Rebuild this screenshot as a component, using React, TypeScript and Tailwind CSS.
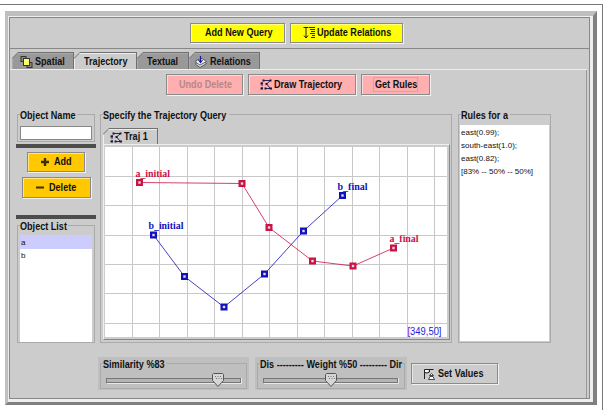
import type { ReactNode } from "react";

const RED = "#cc1144";
const BLUE = "#1111bb";

const vLines = [27.5, 54.5, 82.5, 109.5, 137.5, 164.5, 192.5, 219.5, 247.5, 274.5, 302.5, 329.5];
const hLines = [29.5, 58.5, 88.5, 117.5, 146.5, 176.5];

const trajectories = [
    { color: RED, points: [[34.5, 35.5], [137, 36.5], [164, 80.5], [207.5, 114], [248, 119], [288.5, 101]] },
    { color: BLUE, points: [[48.5, 88], [79.5, 129.5], [119, 160], [159.5, 127], [198.5, 84], [237.5, 48.5]] },
];

const labels = [
    { text: "a_initial", x: 30.5, y: 29.5, w: 34.5, color: RED },
    { text: "b_initial", x: 43.5, y: 82, w: 35, color: BLUE },
    { text: "b_final", x: 232.5, y: 43, w: 30, color: BLUE },
    { text: "a_final", x: 284.5, y: 95, w: 29, color: RED },
];

const rules = ["east(0.99);", "south-east(1.0);", "east(0.82);", "[83% -- 50% -- 50%]"];

function SpatialIcon() {
    return (
        <svg width="13" height="12" viewBox="0 0 13 12" className="shrink-0">
            <rect x="1" y="0.5" width="5" height="5" fill="#888" stroke="#333" />
            <rect x="7" y="6.5" width="5" height="5" fill="#888" stroke="#333" />
            <rect x="3.5" y="2.5" width="6" height="7" fill="#ffff66" stroke="#333" />
        </svg>
    );
}

function RelationsIcon() {
    return (
        <svg width="12" height="12" viewBox="0 0 12 12" className="shrink-0">
            <path d="M1 6.5 7 4.5 11.5 7.5 5 11.5 1 8.5Z" fill="#ddd" stroke="#444" strokeWidth="0.8" />
            <path d="M1 4.5 7 2.5 11.5 5.5 5 9 1 6.5Z" fill="#f4f4f4" stroke="#444" strokeWidth="0.8" />
            <path d="M5.5 0v6M3.5 4l2 2.5 2-2.5" fill="none" stroke="#1a1a99" strokeWidth="1.2" />
        </svg>
    );
}

function TrajectoryIcon() {
    return (
        <svg width="12" height="11" viewBox="0 0 12 11" className="shrink-0">
            <path d="M3.5 1.5H10.5L6.5 5 10.5 9.5H5.5" fill="none" stroke="#2c2860" />
            <path d="M2 3v6" stroke="#2c2860" strokeDasharray="1.5 1" />
            <path d="M2.5 0.5h2v2h-2zM0.5 3.5h2.5v2H0.5zM0.5 8.5h2.5v2H0.5zM9.5 0.5h2v2h-2zM5.5 4h2v2h-2zM4.5 8.5h2v2h-2zM9.5 8.5h2.5v2H9.5z" fill="#201830" />
        </svg>
    );
}

function UpdateIcon() {
    return (
        <svg width="13" height="12" viewBox="0 0 13 12" className="shrink-0">
            <path d="M0.5 0.5h5M3 1v10M1 8.5l2 2.5 2-2.5" fill="none" stroke="#222200" />
            <path d="M6 0.5h6M7 2.5h5M8 4.5h4M7 6.5h5M9 8.5h3M8 10.5h4" stroke="#333300" />
        </svg>
    );
}

function SetIcon() {
    return (
        <svg width="12" height="12" viewBox="0 0 12 12" className="shrink-0">
            <path d="M1.5 11V1.5h5V4L4 5 1.5 4.5M6 1.5h4.5" fill="none" stroke="#222" />
            <rect x="2" y="2" width="3" height="2" fill="#fff" />
            <path d="M8.5 5.5 6.5 7.5h4Z" fill="#fff" stroke="#222" strokeWidth="0.8" />
            <path d="M7 8.5h3L11.5 11.5h-6Z" fill="#fff" stroke="#222" strokeWidth="0.8" />
        </svg>
    );
}

// condensed bold text; className carries the width it takes in the row
function Label({ className, children }: { className: string; children: ReactNode }) {
    return (
        <span className={`inline-block shrink-0 ${className}`}>
            <span className="inline-block origin-left scale-x-[0.79] whitespace-pre">{children}</span>
        </span>
    );
}

function Button({ className, children }: { className: string; children: ReactNode }) {
    return (
        <button className={`flex shrink-0 items-center justify-center border border-[#8a8a8a] text-left shadow-[1px_1px_0_#f2f2f2,inset_1px_1px_0_#ffffff80] ${className}`}>
            {children}
        </button>
    );
}

function Tab({ active, className, children }: { active?: boolean; className: string; children: ReactNode }) {
    return (
        <div className={`h-full bg-[#707070] pt-px pr-px [clip-path:polygon(6px_0,100%_0,100%_100%,0_100%,0_6px)] ${className}`}>
            <div
                className={`flex h-full items-center border-t border-l [clip-path:polygon(6px_0,100%_0,100%_100%,0_100%,0_6px)] ${
                    active ? "border-[#eeeeee] bg-[#cccccc]" : "border-[#aaaaaa] bg-[#999999]"
                }`}
            >
                {children}
            </div>
        </div>
    );
}

function Group({ title, titleWidth, className, children }: { title: string; titleWidth: string; className: string; children: ReactNode }) {
    return (
        <div className={`flex flex-col border border-[#aaaaaa] ${className}`}>
            <div className="-mt-[7px] ml-[2px] h-[14px] self-start bg-inherit pr-px leading-[14px]">
                <Label className={titleWidth}>{title}</Label>
            </div>
            {children}
        </div>
    );
}

function Slider({ title, titleWidth, thumb, className }: { title: string; titleWidth: string; thumb: number; className: string }) {
    return (
        <div className={`h-[33px] shrink-0 bg-[#bfbfbf] px-[2px] pt-[6px] ${className}`}>
            <Group title={title} titleWidth={titleWidth} className="h-[26px] border-[#a4a4a4] bg-[#bfbfbf]">
                <svg width="140" height="15" viewBox="0 0 140 15" className="mt-[2px] ml-[3px]">
                    <rect x="2.5" y="5.5" width="134" height="4" fill="#b4b4b4" stroke="#777" />
                    <path d="M3 10.5h134.5V5" fill="none" stroke="#e8e8e8" />
                    <g transform={`translate(${thumb} 0)`}>
                        <path d="M1.5 0.5h9l1 1v6l-5.5 6-5.5-6v-6Z" fill="#d6d6d6" stroke="#555" />
                        <path d="M3 3.5h7M4 5.5h6" stroke="#777" strokeDasharray="1 1.5" />
                    </g>
                </svg>
            </Group>
        </div>
    );
}

function Canvas() {
    return (
        <svg width="342" height="190" viewBox="0 0 342 190" className="bg-white">
            {vLines.map((x) => (
                <path key={x} d={`M${x} 0V190`} stroke="#c8c8c8" />
            ))}
            {hLines.map((y) => (
                <path key={y} d={`M0 ${y}H342`} stroke="#c8c8c8" />
            ))}
            {trajectories.map((t) => (
                <g key={t.color}>
                    <polyline points={t.points.map((p) => p.join(",")).join(" ")} fill="none" stroke={t.color} strokeWidth="0.8" />
                    {t.points.map(([x, y]) => (
                        <g key={x}>
                            <rect x={x - 3.5} y={y - 3.5} width="7" height="7" fill={t.color} />
                            <rect x={x - 1.2} y={y - 1.2} width="2.4" height="2.4" fill="#ddd" />
                        </g>
                    ))}
                </g>
            ))}
            {labels.map((l) => (
                <text key={l.text} x={l.x} y={l.y} textLength={l.w} lengthAdjust="spacingAndGlyphs" fill={l.color} className="font-['Liberation_Serif',serif] text-[10px] font-bold">
                    {l.text}
                </text>
            ))}
            <text x="302.5" y="188" textLength="34" lengthAdjust="spacingAndGlyphs" fill="#2222dd" className="font-['Liberation_Sans',sans-serif] text-[10px] font-normal">
                [349,50]
            </text>
        </svg>
    );
}

export default function App() {
    return (
        <div className="h-[410px] w-[604px] overflow-hidden bg-white pt-1 font-['Liberation_Sans',sans-serif] text-[11.5px] leading-none font-bold text-[#111]">
            <div className="h-full w-[603px] border-t border-r border-[#777] pt-[6px] pl-[5px]">
                <div className="h-[394px] w-[592px] border-t-[5px] border-r-4 border-b-[3px] border-l-[3px] border-t-[#bfbfbf] border-r-[#808080] border-b-[#808080] border-l-[#bfbfbf] bg-[#eeeeee] pt-px pr-[3px] pb-[3px] pl-px">
                    <div className="flex h-full flex-col border border-[#888] bg-[#cccccc]">
                        <div className="flex h-[31px] shrink-0 gap-[5px] border-b border-[#888] pt-[5px] pl-[180px]">
                            <Button className="h-[20px] w-[95px] bg-[#ffff00]"><Label className="w-[66px]">Add New Query</Label></Button>
                            <Button className="h-[20px] w-[113px] gap-px bg-[#ffff00]"><UpdateIcon /><Label className="w-[74px]">Update Relations</Label></Button>
                        </div>
                        <div className="mr-[2px] flex h-[21px] shrink-0 border-b border-[#eeeeee] pt-[3px] pl-[2px]">
                            <Tab className="w-[62px]"><div className="flex items-center gap-[2px] pl-[7px]"><SpatialIcon /><Label className="w-[30px]">Spatial</Label></div></Tab>
                            <Tab active className="-mb-px w-[63px]"><Label className="ml-[9px] w-[45px]">Trajectory</Label></Tab>
                            <Tab className="w-[52px]"><Label className="ml-[9px] w-[32px]">Textual</Label></Tab>
                            <Tab className="w-[71px]"><div className="flex items-center gap-[3px] pl-[5px]"><RelationsIcon /><Label className="w-[41px]">Relations</Label></div></Tab>
                        </div>
                        <div className="mr-[2px] flex-1 border-r border-[#999]">
                            <div className="flex h-[44px] gap-[5px] pt-[4px] pl-[156px]">
                                <Button className="h-[21px] w-[77px] bg-[#ffafaf] text-[#b58787]"><Label className="w-[52px]">Undo Delete</Label></Button>
                                <Button className="h-[21px] w-[108px] gap-[2px] bg-[#ffafaf]"><TrajectoryIcon /><Label className="w-[70px]">Draw Trajectory</Label></Button>
                                <Button className="h-[21px] w-[69px] bg-[#ffafaf]">
                                    <span className="border border-[#d39ccc] px-px py-[1px]"><Label className="w-[41px]">Get Rules</Label></span>
                                </Button>
                            </div>
                            <div className="flex h-[229px] pl-[6px]">
                                <div className="flex w-[80px] flex-col items-center">
                                    <Group title="Object Name" titleWidth="w-[56px]" className="h-[28px] w-[78px] bg-[#cccccc]">
                                        <input className="mx-[2px] mt-[4px] h-[14px] border border-[#888] bg-white px-1 outline-none" />
                                    </Group>
                                    <div className="mt-[2px] h-[4px] w-full shrink-0 bg-[#4d4d4d]" />
                                    <Button className="mt-[4px] h-[20px] w-[58px] gap-[5px] bg-[#ffc800]">
                                        <svg width="8" height="8" viewBox="0 0 8 8"><path d="M4 0v8M0 4h8" stroke="#3d3000" strokeWidth="2.4" /></svg>
                                        <Label className="w-[17px]">Add</Label>
                                    </Button>
                                    <Button className="mt-[5px] h-[21px] w-[69px] gap-[5px] bg-[#ffc800]">
                                        <svg width="8" height="8" viewBox="0 0 8 8"><path d="M0 3.5h8" stroke="#3d3000" strokeWidth="2" /></svg>
                                        <Label className="w-[28px]">Delete</Label>
                                    </Button>
                                    <div className="mt-[17px] h-[4px] w-full shrink-0 bg-[#4d4d4d]" />
                                    <Group title="Object List" titleWidth="w-[47px]" className="mt-[6px] h-[118px] w-[78px] bg-[#cccccc]">
                                        <div className="mx-[2px] mt-[2px] flex-1 bg-white font-['Liberation_Sans',sans-serif] text-[8px] font-normal">
                                            <div className="h-[14px] bg-[#ccccff] pl-px leading-[15px]">a</div>
                                            <div className="h-[13px] pl-px leading-[13px]">b</div>
                                        </div>
                                    </Group>
                                </div>
                                <Group title="Specify the Trajectory Query" titleWidth="w-[125px]" className="ml-[4px] w-[352px] bg-[#cccccc]">
                                    <div className="mt-[6px] ml-[2px] flex h-[16px] shrink-0">
                                        <Tab active className="w-[55px]"><div className="flex items-center gap-[2px] pl-[6px]"><TrajectoryIcon /><Label className="w-[25px]">Traj 1</Label></div></Tab>
                                    </div>
                                    <div className="ml-[2px] h-[196px] w-[347px] shrink-0 border border-t-[#eee] border-r-[#888] border-b-[#888] border-l-[#eee] pt-[2px] pl-px">
                                        <Canvas />
                                    </div>
                                </Group>
                                <Group title="Rules for a" titleWidth="w-[48px]" className="ml-[6px] w-[93px] bg-[#cccccc]">
                                    <div className="mx-px mt-[3px] mb-px flex-1 bg-white pt-px pl-px font-['Liberation_Sans',sans-serif] text-[8px] font-normal whitespace-nowrap">
                                        {rules.map((r) => (
                                            <div key={r} className="h-[13px] leading-[13px]">{r}</div>
                                        ))}
                                    </div>
                                </Group>
                            </div>
                            <div className="flex pt-[14px] pl-[88px]">
                                <Slider title="Similarity %83" titleWidth="w-[62px]" thumb={108} className="w-[151px]" />
                                <Slider title="Dis --------- Weight %50 --------- Dir" titleWidth="w-[141px]" thumb={64} className="ml-[6px] w-[152px]" />
                                <Button className="mt-[6px] ml-[4px] h-[21px] w-[87px] gap-[3px] bg-[#cccccc]"><SetIcon /><Label className="w-[48px]">Set Values</Label></Button>
                            </div>
                        </div>
                    </div>
                </div>
            </div>
        </div>
    );
}
